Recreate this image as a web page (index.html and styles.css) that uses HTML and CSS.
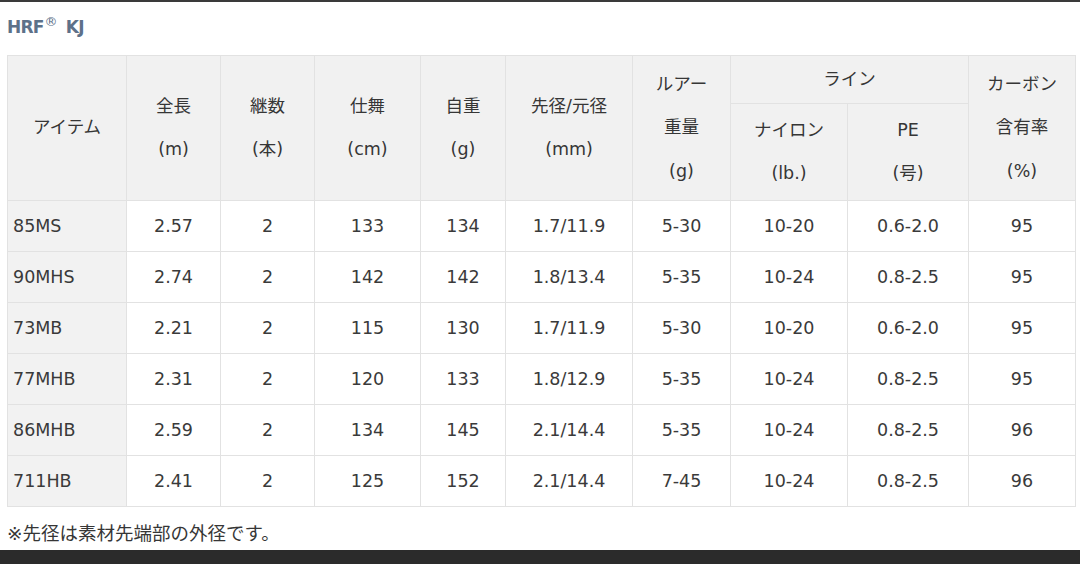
FILE: index.html
```html
<!DOCTYPE html>
<html lang="ja">
<head>
<meta charset="utf-8">
<link rel="stylesheet" href="styles.css">
</head>
<body>
<div class="page">
  <div class="topbar"></div>
  <div class="content">
    <h2 class="title">HRF<sup>®</sup> KJ</h2>
    <table class="spec">
      <colgroup>
        <col class="c1"><col class="c2"><col class="c3"><col class="c4"><col class="c5">
        <col class="c6"><col class="c7"><col class="c8"><col class="c9"><col class="c10">
      </colgroup>
      <thead>
        <tr class="h1">
          <th rowspan="2">アイテム</th>
          <th rowspan="2">全長<br>(m)</th>
          <th rowspan="2">継数<br>(本)</th>
          <th rowspan="2">仕舞<br>(cm)</th>
          <th rowspan="2">自重<br>(g)</th>
          <th rowspan="2">先径/元径<br>(mm)</th>
          <th rowspan="2">ルアー<br>重量<br>(g)</th>
          <th colspan="2">ライン</th>
          <th rowspan="2">カーボン<br>含有率<br>(%)</th>
        </tr>
        <tr class="h2">
          <th>ナイロン<br>(lb.)</th>
          <th>PE<br>(号)</th>
        </tr>
      </thead>
      <tbody>
        <tr><td>85MS</td><td>2.57</td><td>2</td><td>133</td><td>134</td><td>1.7/11.9</td><td>5-30</td><td>10-20</td><td>0.6-2.0</td><td>95</td></tr>
        <tr><td>90MHS</td><td>2.74</td><td>2</td><td>142</td><td>142</td><td>1.8/13.4</td><td>5-35</td><td>10-24</td><td>0.8-2.5</td><td>95</td></tr>
        <tr><td>73MB</td><td>2.21</td><td>2</td><td>115</td><td>130</td><td>1.7/11.9</td><td>5-30</td><td>10-20</td><td>0.6-2.0</td><td>95</td></tr>
        <tr><td>77MHB</td><td>2.31</td><td>2</td><td>120</td><td>133</td><td>1.8/12.9</td><td>5-35</td><td>10-24</td><td>0.8-2.5</td><td>95</td></tr>
        <tr><td>86MHB</td><td>2.59</td><td>2</td><td>134</td><td>145</td><td>2.1/14.4</td><td>5-35</td><td>10-24</td><td>0.8-2.5</td><td>96</td></tr>
        <tr><td>711HB</td><td>2.41</td><td>2</td><td>125</td><td>152</td><td>2.1/14.4</td><td>7-45</td><td>10-24</td><td>0.8-2.5</td><td>96</td></tr>
      </tbody>
    </table>
    <p class="note">※先径は素材先端部の外径です。</p>
  </div>
  <div class="bottombar"></div>
</div>
</body>
</html>
```
FILE: styles.css
```css
html, body {
  margin: 0;
  padding: 0;
  background: #ffffff;
}
.page {
  width: 1080px;
  height: 564px;
  display: flex;
  flex-direction: column;
  overflow: hidden;
  font-family: "DejaVu Sans", "Noto Sans CJK JP", sans-serif;
  color: #3a3a3a;
}
.topbar {
  height: 2px;
  background: #3a3a3a;
  flex: none;
}
.content {
  flex: 1;
  padding: 0 0 0 7px;
}
.title {
  margin: 0;
  height: 53px;
  line-height: 51px;
  font-family: "DejaVu Sans", sans-serif;
  font-weight: 700;
  font-size: 17px;
  color: #5d7189;
  letter-spacing: -0.8px;
}
.title sup {
  font-size: 13px;
  vertical-align: 0;
  position: relative;
  top: -7px;
  font-weight: 400;
  margin: 0 4px 0 1px;
}
.spec {
  border-collapse: collapse;
  table-layout: fixed;
  width: 1068px;
  font-size: 17.5px;
}
.spec th, .spec td {
  border: 1px solid #e2e2e2;
  padding: 0;
  text-align: center;
  font-weight: 400;
}
.spec th {
  background: #f1f1f1;
  line-height: 43.5px;
  color: #363636;
}
.h1 { height: 48px; }
.h2 { height: 97px; }
.spec td {
  height: 50px;
  line-height: 50px;
  background: #ffffff;
}
.spec td:first-child {
  background: #f2f2f2;
  text-align: left;
  padding-left: 5px;
}
.c1 { width: 119px; }
.c2 { width: 94px; }
.c3 { width: 94px; }
.c4 { width: 106px; }
.c5 { width: 85px; }
.c6 { width: 127px; }
.c7 { width: 98px; }
.c8 { width: 117px; }
.c9 { width: 121px; }
.c10 { width: 107px; }
.note {
  margin: 15px 0 0 0;
  font-size: 18.5px;
  line-height: 24px;
  color: #363636;
}
.bottombar {
  height: 14px;
  background: #2b2b2b;
  flex: none;
}
```
